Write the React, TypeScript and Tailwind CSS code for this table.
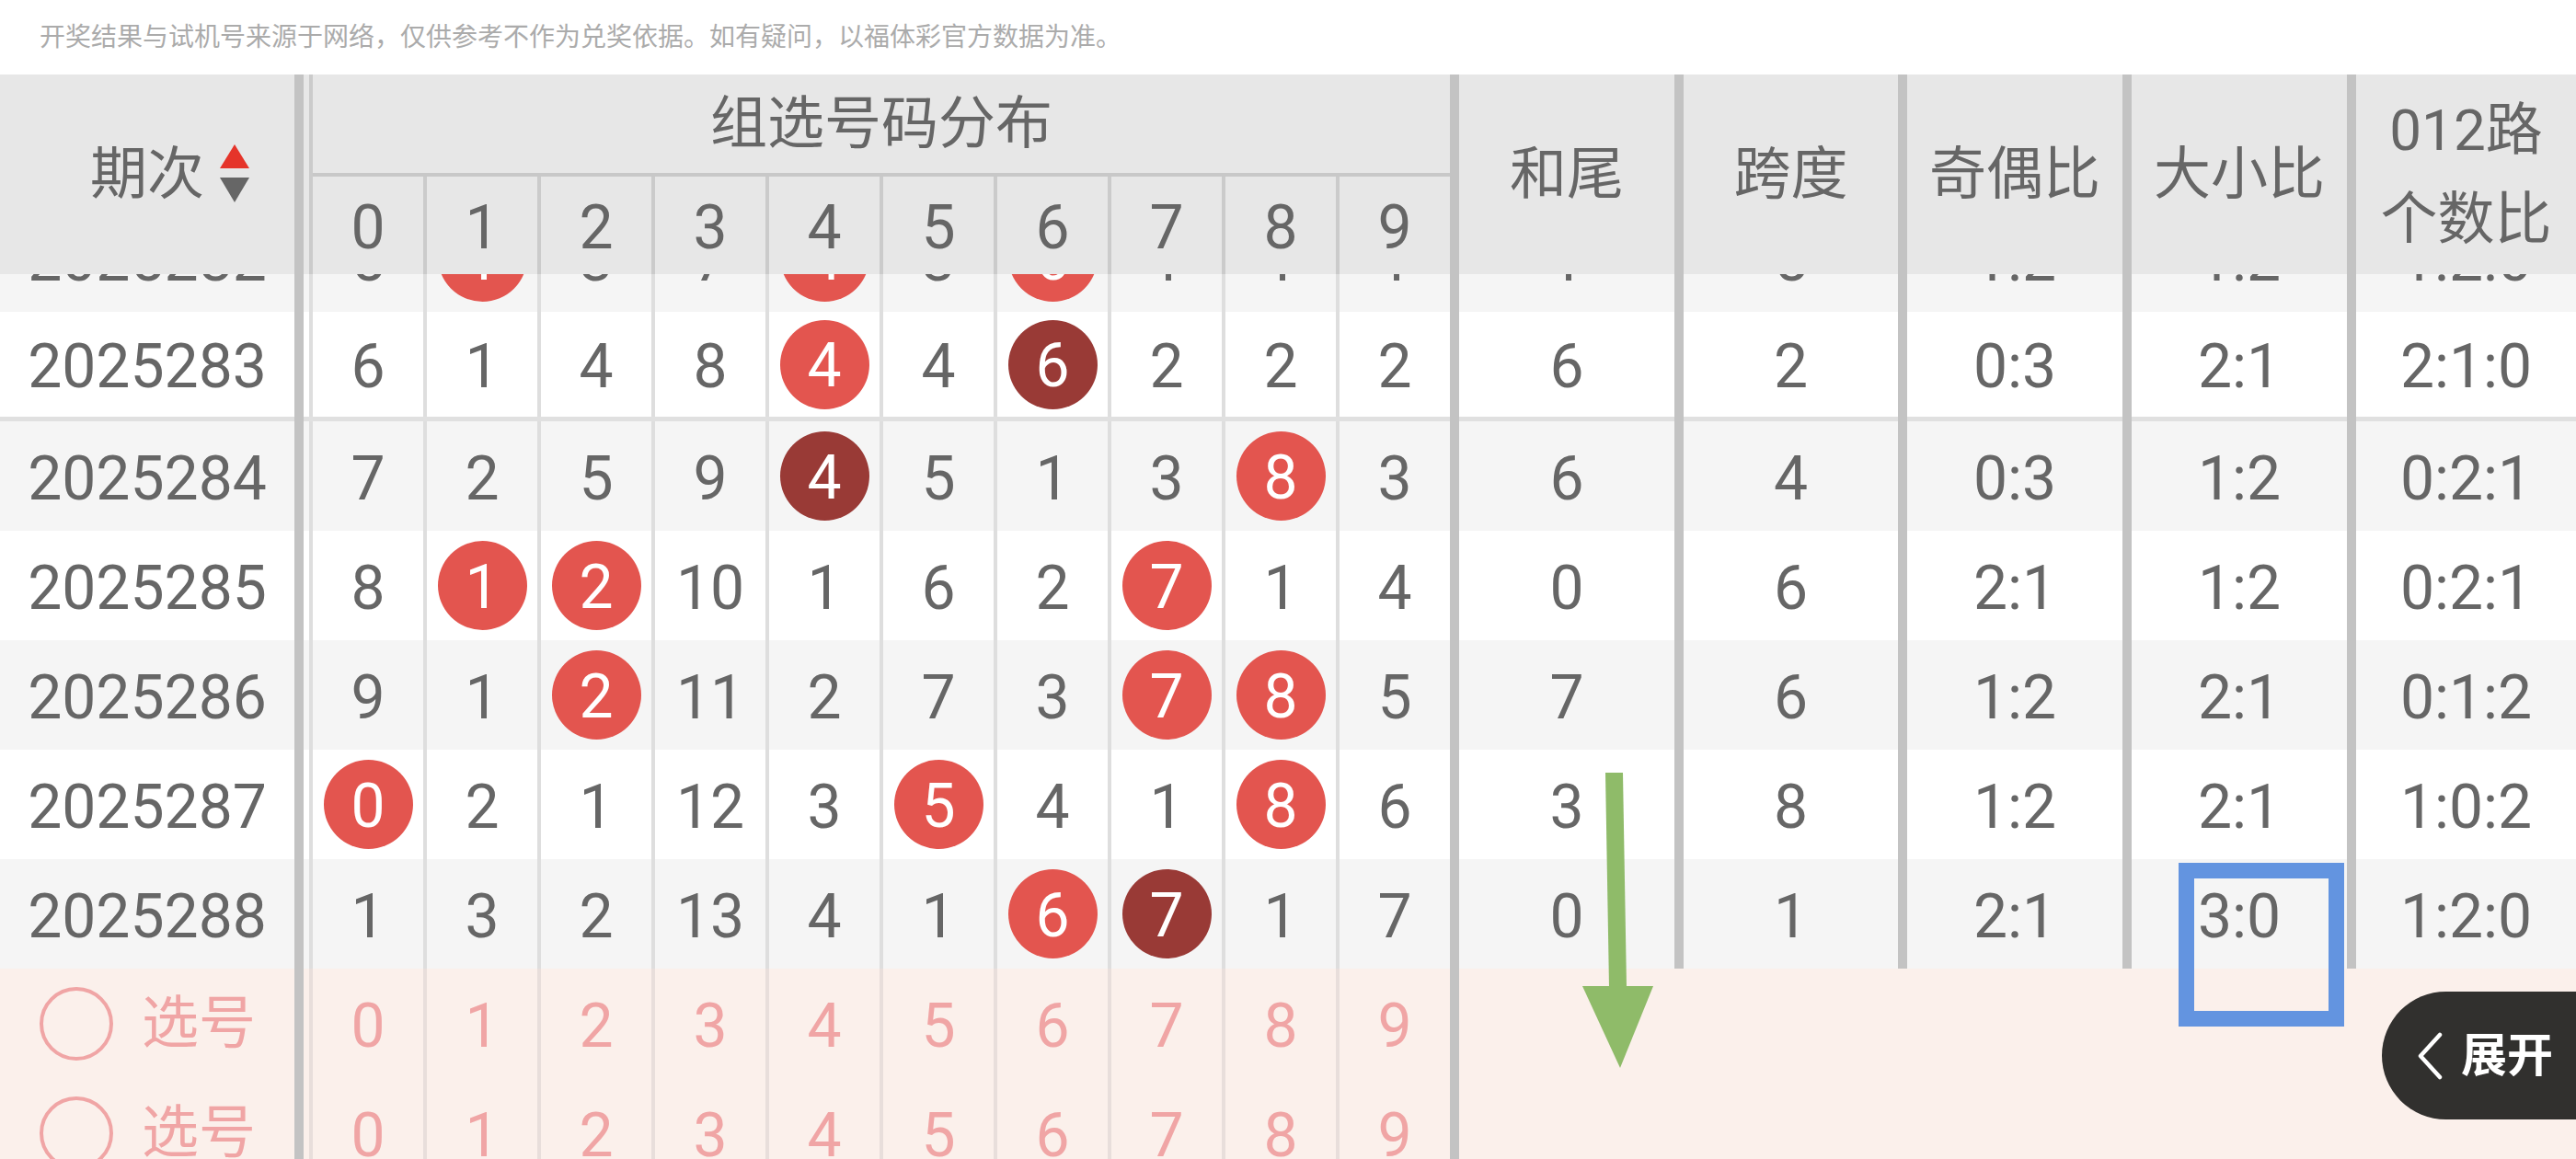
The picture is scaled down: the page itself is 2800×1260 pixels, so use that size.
import React from "react";

type Row = {
  id: string;
  d: string[]; // "r4" = red ball, "d6" = dark ball
  hw: string;
  kd: string;
  jo: string;
  dx: string;
  lu: string;
  bg: string;
  line?: boolean;
};

const rows: Row[] = [
  { id: "2025282", d: ["5", "r1", "3", "7", "r4", "3", "r6", "1", "1", "1"], hw: "1", kd: "5", jo: "1:2", dx: "1:2", lu: "1:2:0", bg: "bg-[#f5f5f5]" },
  { id: "2025283", d: ["6", "1", "4", "8", "r4", "4", "d6", "2", "2", "2"], hw: "6", kd: "2", jo: "0:3", dx: "2:1", lu: "2:1:0", bg: "bg-white", line: true },
  { id: "2025284", d: ["7", "2", "5", "9", "d4", "5", "1", "3", "r8", "3"], hw: "6", kd: "4", jo: "0:3", dx: "1:2", lu: "0:2:1", bg: "bg-[#f5f5f5]" },
  { id: "2025285", d: ["8", "r1", "r2", "10", "1", "6", "2", "r7", "1", "4"], hw: "0", kd: "6", jo: "2:1", dx: "1:2", lu: "0:2:1", bg: "bg-white" },
  { id: "2025286", d: ["9", "1", "r2", "11", "2", "7", "3", "r7", "r8", "5"], hw: "7", kd: "6", jo: "1:2", dx: "2:1", lu: "0:1:2", bg: "bg-[#f5f5f5]" },
  { id: "2025287", d: ["r0", "2", "1", "12", "3", "r5", "4", "1", "r8", "6"], hw: "3", kd: "8", jo: "1:2", dx: "2:1", lu: "1:0:2", bg: "bg-white" },
  { id: "2025288", d: ["1", "3", "2", "13", "4", "1", "r6", "d7", "1", "7"], hw: "0", kd: "1", jo: "2:1", dx: "3:0", lu: "1:2:0", bg: "bg-[#f5f5f5]" },
];

const digits = ["0", "1", "2", "3", "4", "5", "6", "7", "8", "9"];

function Sep({ ext }: { ext?: boolean }) {
  return <div className={ext ? "w-[10px] shrink-0 bg-[#c3c3c3] -mb-[5px]" : "w-[10px] shrink-0 bg-[#c3c3c3]"} />;
}

function Ball({ v }: { v: string }) {
  if (v.startsWith("r")) {
    return (
      <div className="flex h-[97px] w-[97px] items-center justify-center rounded-full bg-[#e3554f] text-white">
        <span className="relative top-[2px]">{v.slice(1)}</span>
      </div>
    );
  }
  if (v.startsWith("d")) {
    return (
      <div className="flex h-[97px] w-[97px] items-center justify-center rounded-full bg-[#993a36] text-white">
        <span className="relative top-[2px]">{v.slice(1)}</span>
      </div>
    );
  }
  return <span className="relative top-[3px]">{v}</span>;
}

function DataRow({ r }: { r: Row }) {
  const cell = "flex shrink-0 items-center justify-center";
  return (
    <div className={`flex h-[119px] ${r.bg} ${r.line ? "border-b-[5px] border-[#e0e0e0]" : ""}`}>
      <div className={`${cell} w-[320px]`}>
        <span className="relative top-[3px]">{r.id}</span>
      </div>
      <Sep ext={r.line} />
      <div className="w-[6px] shrink-0" />
      {r.d.map((v, i) => (
        <div key={i} className={`${cell} w-[124px] border-l-4 border-[#dedede]`}>
          <Ball v={v} />
        </div>
      ))}
      <Sep ext={r.line} />
      <div className={`${cell} w-[234px]`}>
        <span className="relative top-[3px]">{r.hw}</span>
      </div>
      <Sep ext={r.line} />
      <div className={`${cell} w-[233px]`}>
        <span className="relative top-[3px]">{r.kd}</span>
      </div>
      <Sep ext={r.line} />
      <div className={`${cell} w-[234px]`}>
        <span className="relative top-[3px]">{r.jo}</span>
      </div>
      <Sep ext={r.line} />
      <div className={`${cell} w-[234px]`}>
        <span className="relative top-[3px]">{r.dx}</span>
      </div>
      <Sep ext={r.line} />
      <div className="flex flex-1 items-center justify-center">
        <span className="relative top-[3px]">{r.lu}</span>
      </div>
    </div>
  );
}

function PickRow() {
  return (
    <div className="flex h-[119px] bg-[#fbf0eb] text-[#f0a5a5]">
      <div className="flex w-[320px] shrink-0 items-center gap-[31px] pl-[43px]">
        <div className="h-[80px] w-[80px] rounded-full border-4 border-[#f0a5a5]" />
        <span className="text-[62px]">选号</span>
      </div>
      <Sep />
      <div className="w-[6px] shrink-0" />
      {digits.map((v) => (
        <div key={v} className="flex w-[124px] shrink-0 items-center justify-center border-l-4 border-[#e8dedb]">
          <span className="relative top-[3px]">{v}</span>
        </div>
      ))}
      <Sep />
      <div className="flex-1" />
    </div>
  );
}

export default function App() {
  return (
    <div className="relative h-[1260px] w-[2800px] overflow-hidden bg-white font-[family-name:Roboto,'Noto_Sans_CJK_SC',sans-serif] text-[#666666]">
      {/* 提示 */}
      <div className="flex h-[81px] items-center pl-[43px] text-[28px] text-[#ababab]">
        开奖结果与试机号来源于网络，仅供参考不作为兑奖依据。如有疑问，以福体彩官方数据为准。
      </div>

      {/* 表头 */}
      <div className="flex h-[217px] bg-[#e7e7e7] text-[62px] leading-none">
        <div className="relative flex w-[320px] shrink-0 items-center justify-center">
          <span>期次</span>
          <svg className="absolute left-[238px] top-[76px]" width="34" height="64" viewBox="0 0 34 64">
            <polygon points="17,0 33,26 1,26" fill="#e5342a" />
            <polygon points="1,36 33,36 17,63" fill="#666666" />
          </svg>
        </div>
        <Sep />
        <div className="w-[6px] shrink-0" />
        <div className="flex w-[1240px] shrink-0 flex-col border-l-4 border-[#cbcbcb]">
          <div className="flex h-[107px] items-center justify-center">组选号码分布</div>
          <div className="h-[4px] bg-[#c8c8c8]" />
          <div className="flex flex-1 text-[66px]">
            {digits.map((v, i) => (
              <div
                key={v}
                className={
                  i === 0
                    ? "flex w-[120px] shrink-0 items-center justify-center"
                    : "flex w-[124px] shrink-0 items-center justify-center border-l-4 border-[#cbcbcb]"
                }
              >
                <span className="relative top-[3px]">{v}</span>
              </div>
            ))}
          </div>
        </div>
        <Sep />
        <div className="flex w-[234px] shrink-0 items-center justify-center">和尾</div>
        <Sep />
        <div className="flex w-[233px] shrink-0 items-center justify-center">跨度</div>
        <Sep />
        <div className="flex w-[234px] shrink-0 items-center justify-center">奇偶比</div>
        <Sep />
        <div className="flex w-[234px] shrink-0 items-center justify-center">大小比</div>
        <Sep />
        <div className="flex flex-1 flex-col items-center justify-center leading-[97px]">
          <span>012路</span>
          <span>个数比</span>
        </div>
      </div>

      {/* 数据 */}
      <div className="h-[962px] overflow-hidden text-[66px] leading-none">
        <div className="-mt-[78px]">
          {rows.map((r) => (
            <DataRow key={r.id} r={r} />
          ))}
          <PickRow />
          <PickRow />
        </div>
      </div>

      {/* 标注 */}
      <svg className="absolute left-[1715px] top-[835px]" width="90" height="330" viewBox="0 0 90 330">
        <polygon points="30,5 49,5 53,238 34,238" fill="#8fbb69" />
        <polygon points="5,237 82,237 46,326" fill="#8fbb69" />
      </svg>
      <div className="absolute left-[2368px] top-[938px] h-[178px] w-[180px] border-[17px] border-[#6394e0]" />

      <div className="absolute right-0 top-[1078px] flex h-[139px] w-[211px] items-center rounded-l-full bg-[#31302e] pl-[38px] text-white">
        <svg width="30" height="52" viewBox="0 0 30 52">
          <polyline points="25,3 4,26 25,49" fill="none" stroke="#ffffff" strokeWidth="4.5" strokeLinecap="round" strokeLinejoin="round" />
        </svg>
        <span className="ml-[18px] text-[50px] font-bold leading-none">展开</span>
      </div>
    </div>
  );
}
